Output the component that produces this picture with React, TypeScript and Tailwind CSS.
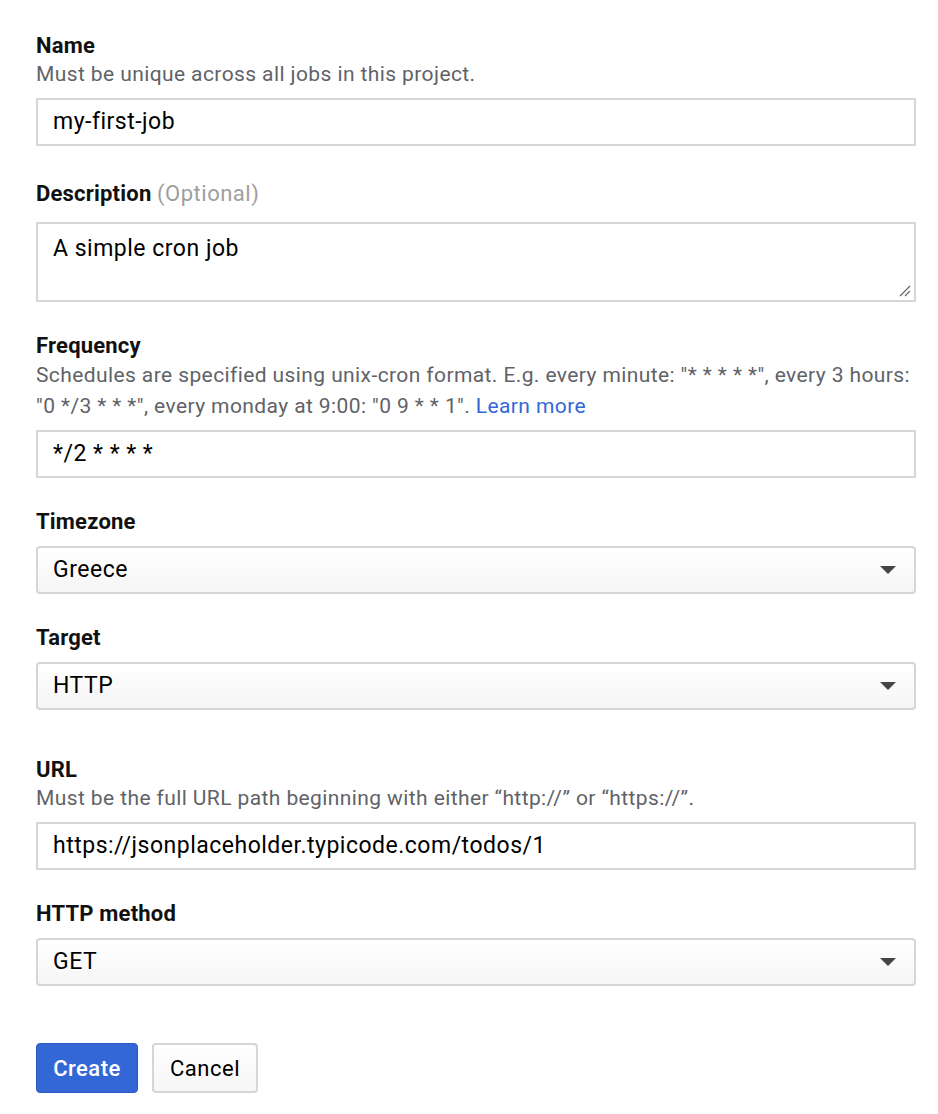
import React from "react";

const font = { fontFamily: "Roboto, 'Liberation Sans', sans-serif" };

function Label({ children }: { children: React.ReactNode }) {
  return <div className="text-[22px] leading-[28px] font-bold tracking-[0.2px] text-[#111]">{children}</div>;
}

function Helper({ children, className = "" }: { children: React.ReactNode; className?: string }) {
  return <div className={"text-[21px] leading-[28px] tracking-[0.4px] text-[#5f6368] " + className}>{children}</div>;
}

function Input({ value, className = "" }: { value: string; className?: string }) {
  return (
    <div className={"h-[48px] w-full border-2 border-[#d6d6d6] bg-white px-[15px] flex items-center text-[23px] text-black " + className}>
      {value}
    </div>
  );
}

function Select({ value, className = "" }: { value: string; className?: string }) {
  return (
    <div className={"h-[48px] w-full border-2 border-[#d6d6d6] rounded-[4px] bg-gradient-to-b from-white to-[#f5f5f5] pl-[15px] pr-[18px] flex items-center justify-between text-[23px] text-black " + className}>
      <span>{value}</span>
      <svg width="16" height="8" viewBox="0 0 16 8"><path d="M0 0 L16 0 L8 8 Z" fill="#444" /></svg>
    </div>
  );
}

export default function App() {
  return (
    <div style={font} className="w-[938px] h-[1114px] bg-white tracking-[0.5px]">
      <div className="ml-[36px] w-[880px] pt-[32px]">
        <Label>Name</Label>
        <Helper>Must be unique across all jobs in this project.</Helper>
        <Input value="my-first-job" className="mt-[10px]" />

        <div className="mt-[34px]">
          <Label>
            Description <span className="font-normal tracking-[0.5px] text-[#9e9e9e]">(Optional)</span>
          </Label>
        </div>
        <div className="relative mt-[14px] h-[80px] w-full border-2 border-[#d6d6d6] bg-white px-[15px] pt-[10px] text-[23px] leading-[30px] text-black">
          A simple cron job
          <svg className="absolute right-[3px] bottom-[3px]" width="12" height="12" viewBox="0 0 12 12">
            <path d="M1 11 L11 1 M6 11 L11 6" stroke="#666" strokeWidth="1.2" />
          </svg>
        </div>

        <div className="mt-[30px]">
          <Label>Frequency</Label>
        </div>
        <Helper className="leading-[31px]">
          Schedules are specified using unix-cron format. E.g. every minute: "* * * * *", every 3 hours: "0 */3 * * *",
          every monday at 9:00: "0 9 * * 1". <span className="text-[#3367d6]">Learn more</span>
        </Helper>
        <Input value="*/2 * * * *" className="mt-[8px]" />

        <div className="mt-[30px]">
          <Label>Timezone</Label>
        </div>
        <Select value="Greece" className="mt-[10px]" />

        <div className="mt-[30px]">
          <Label>Target</Label>
        </div>
        <Select value="HTTP" className="mt-[10px]" />

        <div className="mt-[46px]">
          <Label>URL</Label>
        </div>
        <Helper>Must be the full URL path beginning with either “http://” or “https://”.</Helper>
        <Input value="https://jsonplaceholder.typicode.com/todos/1" className="mt-[10px]" />

        <div className="mt-[30px]">
          <Label>HTTP method</Label>
        </div>
        <Select value="GET" className="mt-[10px]" />

        <div className="mt-[57px] flex gap-[14px]">
          <button className="h-[50px] w-[102px] rounded-[4px] bg-[#3367d6] border border-[#2a5bc7] text-white text-[22px] font-medium">
            Create
          </button>
          <button className="h-[50px] w-[106px] rounded-[4px] bg-gradient-to-b from-white to-[#f6f6f6] border-2 border-[#d6d6d6] text-black text-[22px]">
            Cancel
          </button>
        </div>
      </div>
    </div>
  );
}
